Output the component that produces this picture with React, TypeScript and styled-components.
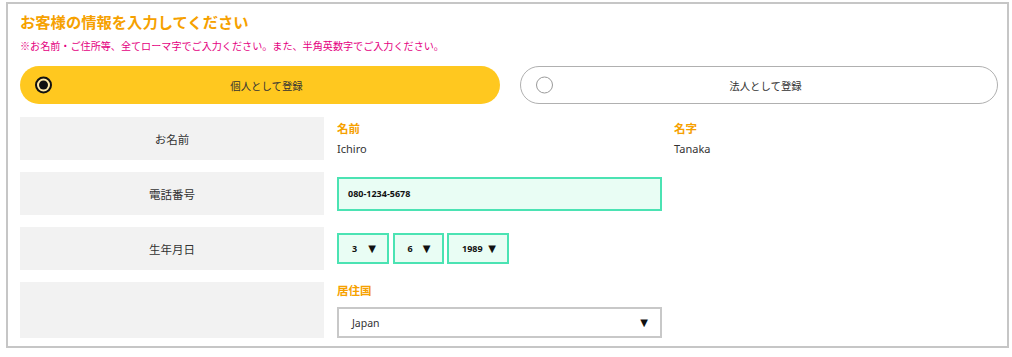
import React from "react";
import styled, { createGlobalStyle } from "styled-components";

const Global = createGlobalStyle`
  html, body { margin: 0; padding: 0; background: #fff; }
  body { font-family: "Noto Sans CJK JP", "Noto Sans", sans-serif; color: #333; }
  * { box-sizing: border-box; }
`;

const Frame = styled.section`
  margin: 2px 0 0 6px;
  width: 1003px;
  border: 2px solid #c6c6c6;
  padding: 6px 9px 9px 12px;
`;

const Title = styled.h1`
  margin: 0;
  font-size: 15.3px;
  line-height: 22px;
  font-weight: 700;
  color: #f6a100;
`;

const Note = styled.p`
  margin: 6px 0 0;
  font-size: 10.1px;
  line-height: 16px;
  color: #e4007f;
`;

const TypeRow = styled.div`
  display: grid;
  grid-template-columns: 480px 478px;
  column-gap: 20px;
  margin-top: 12px;
`;

const Pill = styled.div<{ $active?: boolean }>`
  position: relative;
  height: 38px;
  border-radius: 19px;
  display: flex;
  align-items: center;
  justify-content: center;
  padding-left: 13px;
  font-size: 10.4px;
  color: #333;
  background: ${(p) => (p.$active ? "#ffc81f" : "#fff")};
  border: ${(p) => (p.$active ? "none" : "1.5px solid #b0b0b0")};
`;

const Radio = styled.span<{ $checked?: boolean }>`
  position: absolute;
  left: 15px;
  top: 50%;
  transform: translateY(-50%);
  width: 17px;
  height: 17px;
  border-radius: 50%;
  border: ${(p) => (p.$checked ? "2px solid #111" : "1px solid #9a9a9a")};
  background: ${(p) => (p.$checked ? "#ffe9a6" : "#fff")};
  display: flex;
  align-items: center;
  justify-content: center;
  &::after {
    content: "";
    display: ${(p) => (p.$checked ? "block" : "none")};
    width: 9px;
    height: 9px;
    border-radius: 50%;
    background: #111;
  }
`;

const Rows = styled.div`
  margin-top: 13px;
  display: flex;
  flex-direction: column;
  gap: 12px;
`;

const Row = styled.div<{ $h: number }>`
  display: grid;
  grid-template-columns: 304px 1fr;
  column-gap: 13px;
  height: ${(p) => p.$h}px;
`;

const Label = styled.div`
  background: #f2f2f2;
  display: flex;
  align-items: center;
  justify-content: center;
  font-size: 11.5px;
  color: #333;
`;

const Field = styled.div<{ $center?: boolean; $pt?: number }>`
  display: flex;
  flex-direction: column;
  justify-content: ${(p) => (p.$center ? "center" : "flex-start")};
  padding-top: ${(p) => p.$pt ?? 0}px;
`;

const NameGrid = styled.div`
  display: grid;
  grid-template-columns: 337px 1fr;
`;

const Caption = styled.div`
  font-size: 11.5px;
  line-height: 16px;
  font-weight: 700;
  color: #f6a100;
`;

const Value = styled.div`
  margin-top: 5px;
  font-family: "Noto Sans", sans-serif;
  font-size: 11px;
  line-height: 16px;
  color: #333;
`;

const Input = styled.div`
  width: 325px;
  height: 34px;
  border: 2px solid #4be3b3;
  background: #e9fdf4;
  display: flex;
  align-items: center;
  padding-left: 9px;
  font-family: "Noto Sans", sans-serif;
  font-size: 9px;
  font-weight: 700;
  color: #111;
`;

const DateGroup = styled.div`
  display: flex;
  gap: 3.5px;
`;

const SmallSelect = styled.div<{ $w: number }>`
  width: ${(p) => p.$w}px;
  height: 31px;
  border: 2px solid #4be3b3;
  background: #e9fdf4;
  display: flex;
  align-items: center;
  justify-content: space-between;
  padding: 0 11px 0 13px;
  font-family: "Noto Sans", sans-serif;
  font-size: 9px;
  font-weight: 700;
  color: #111;
`;

const Arrow = styled.span`
  font-family: "DejaVu Sans", sans-serif;
  font-size: 10px;
  line-height: 1;
  color: #111;
`;

const CountrySelect = styled.div`
  margin-top: 9px;
  width: 325px;
  height: 31px;
  border: 2px solid #c8c8c8;
  background: #fff;
  display: flex;
  align-items: center;
  justify-content: space-between;
  padding: 0 12px 0 13px;
  font-family: "Noto Sans", sans-serif;
  font-size: 10.5px;
  color: #333;
`;

export default function App() {
  return (
    <>
      <Global />
      <Frame>
        <Title>お客様の情報を入力してください</Title>
        <Note>※お名前・ご住所等、全てローマ字でご入力ください。また、半角英数字でご入力ください。</Note>
        <TypeRow>
          <Pill $active>
            <Radio $checked />
            個人として登録
          </Pill>
          <Pill>
            <Radio />
            法人として登録
          </Pill>
        </TypeRow>
        <Rows>
          <Row $h={43}>
            <Label>お名前</Label>
            <Field $pt={3}>
              <NameGrid>
                <div>
                  <Caption>名前</Caption>
                  <Value>Ichiro</Value>
                </div>
                <div>
                  <Caption>名字</Caption>
                  <Value>Tanaka</Value>
                </div>
              </NameGrid>
            </Field>
          </Row>
          <Row $h={43}>
            <Label>電話番号</Label>
            <Field $center>
              <Input>080-1234-5678</Input>
            </Field>
          </Row>
          <Row $h={43}>
            <Label>生年月日</Label>
            <Field $center>
              <DateGroup>
                <SmallSelect $w={52}>
                  <span>3</span>
                  <Arrow>▼</Arrow>
                </SmallSelect>
                <SmallSelect $w={51}>
                  <span>6</span>
                  <Arrow>▼</Arrow>
                </SmallSelect>
                <SmallSelect $w={62}>
                  <span>1989</span>
                  <Arrow>▼</Arrow>
                </SmallSelect>
              </DateGroup>
            </Field>
          </Row>
          <Row $h={55}>
            <Label />
            <Field>
              <Caption>居住国</Caption>
              <CountrySelect>
                <span>Japan</span>
                <Arrow>▼</Arrow>
              </CountrySelect>
            </Field>
          </Row>
        </Rows>
      </Frame>
    </>
  );
}
